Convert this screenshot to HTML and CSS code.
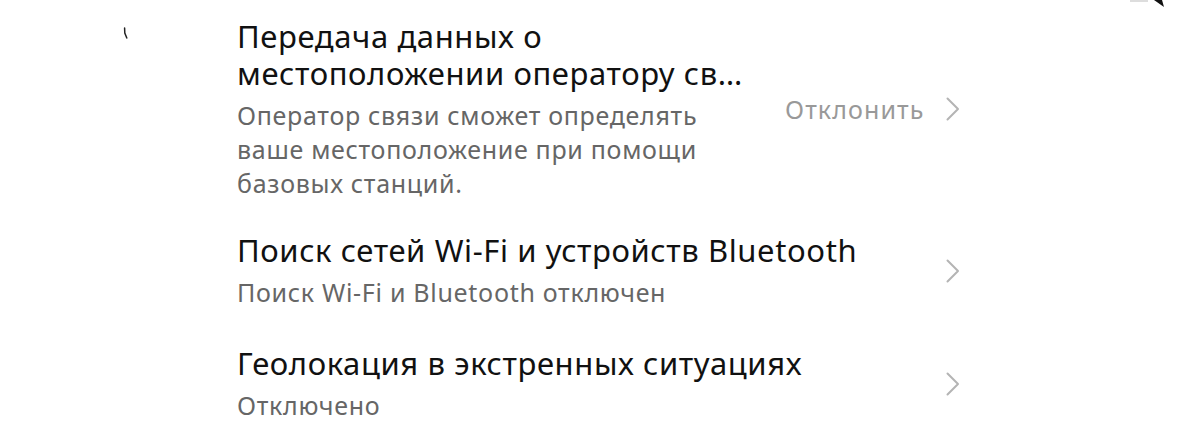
FILE: index.html
```html
<!DOCTYPE html>
<html lang="ru">
<head>
<meta charset="utf-8">
<title>Местоположение</title>
<link rel="stylesheet" href="styles.css">
</head>
<body>
<div class="page">
  <svg class="mark-left" width="8" height="14" viewBox="0 0 8 14"><path d="M2.6 1 L2.8 6 L4.8 11" fill="none" stroke="#222" stroke-width="1.5" stroke-linecap="round"/></svg>
  <svg class="mark-right" width="40" height="10" viewBox="0 0 40 10"><path d="M26 0 L34 0 L36 7 Z" fill="#111"/><path d="M2 1 L20 1" stroke="#ddd" stroke-width="2"/></svg>
  <ul class="list">
    <li class="row row-first">
      <div class="text text-narrow">
        <div class="title">Передача данных о местоположении оператору св…</div>
        <div class="sub">Оператор связи сможет определять ваше местоположение при помощи базовых станций.</div>
      </div>
      <div class="action">
        <span class="value">Отклонить</span>
        <svg class="chev" width="14" height="24" viewBox="0 0 14 24"><path d="M1.5 1.5 L12 12 L1.5 22.5" fill="none" stroke="#b4b4b4" stroke-width="2" stroke-linecap="round" stroke-linejoin="round"/></svg>
      </div>
    </li>
    <li class="row">
      <div class="text">
        <div class="title">Поиск сетей Wi-Fi и устройств Bluetooth</div>
        <div class="sub">Поиск Wi-Fi и Bluetooth отключен</div>
      </div>
      <div class="action">
        <svg class="chev" width="14" height="24" viewBox="0 0 14 24"><path d="M1.5 1.5 L12 12 L1.5 22.5" fill="none" stroke="#b4b4b4" stroke-width="2" stroke-linecap="round" stroke-linejoin="round"/></svg>
      </div>
    </li>
    <li class="row">
      <div class="text">
        <div class="title">Геолокация в экстренных ситуациях</div>
        <div class="sub">Отключено</div>
      </div>
      <div class="action">
        <svg class="chev" width="14" height="24" viewBox="0 0 14 24"><path d="M1.5 1.5 L12 12 L1.5 22.5" fill="none" stroke="#b4b4b4" stroke-width="2" stroke-linecap="round" stroke-linejoin="round"/></svg>
      </div>
    </li>
  </ul>
</div>
</body>
</html>
```
FILE: styles.css
```css
html, body {
  margin: 0;
  padding: 0;
  background: #ffffff;
}
.page {
  position: relative;
  width: 1200px;
  height: 430px;
  overflow: hidden;
  font-family: "Noto Sans", "Open Sans", sans-serif;
}
.mark-left {
  position: absolute;
  left: 122px;
  top: 27px;
}
.mark-right {
  position: absolute;
  left: 1128px;
  top: 0;
}
.list {
  list-style: none;
  margin: 0 0 0 237px;
  padding: 0;
  width: 726px;
}
.row {
  display: flex;
  align-items: center;
  padding: 18px 0;
  gap: 24px;
}
.row-first {
  padding-bottom: 14px;
}
.text {
  flex: 1;
  min-width: 0;
}
.text-narrow {
  flex: 0 0 524px;
}
.title {
  font-size: 31px;
  line-height: 37px;
  color: #111;
  letter-spacing: 0.6px;
}
.sub {
  font-size: 25px;
  line-height: 34px;
  color: #666;
  margin-top: 6px;
  letter-spacing: 0.7px;
}
.action {
  display: flex;
  align-items: center;
  gap: 22px;
  flex-shrink: 0;
  margin-left: auto;
}
.value {
  font-size: 25px;
  color: #999;
  letter-spacing: 1.1px;
}
.chev {
  display: block;
  margin-right: 3px;
}
```
